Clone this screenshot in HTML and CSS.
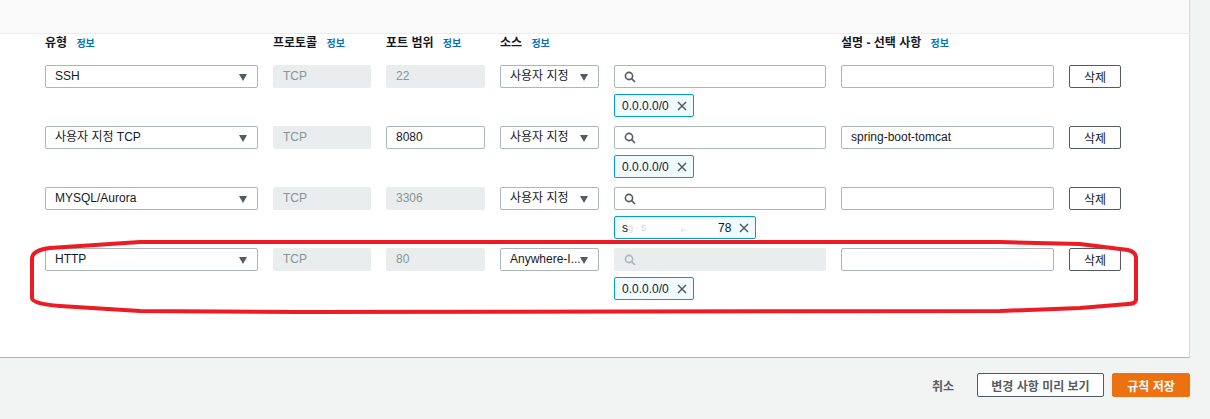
FILE: index.html
```html
<!DOCTYPE html>
<html lang="ko">
<head>
    <meta charset="UTF-8">
    <title>인바운드 규칙 편집</title>
    <link rel="stylesheet" href="styles.css">
</head>
<body>

<div class="page">
    <div class="top-band"></div>

    <div class="panel">
        <div class="rule-grid head">
            <div class="label">유형 <a class="info">정보</a></div>
            <div class="label">프로토콜 <a class="info">정보</a></div>
            <div class="label">포트 범위 <a class="info">정보</a></div>
            <div class="label">소스 <a class="info">정보</a></div>
            <div></div>
            <div class="label">설명 - 선택 사항 <a class="info">정보</a></div>
            <div></div>
        </div>

        <div class="rule">
            <div class="rule-grid">
                <div class="field select">SSH<span class="caret"></span></div>
                <div class="field disabled">TCP</div>
                <div class="field disabled">22</div>
                <div class="field select">사용자 지정<span class="caret"></span></div>
                <div class="field search"><svg class="mag" viewBox="0 0 12 12"><circle cx="5" cy="5" r="3.6"/><path d="M7.6 7.6 L11 11"/></svg></div>
                <div class="field"></div>
                <button class="btn-del">삭제</button>
            </div>
            <div class="chips">
                <span class="chip">0.0.0.0/0<svg class="x" viewBox="0 0 10 10"><path d="M1 1 L9 9 M9 1 L1 9"/></svg></span>
            </div>
        </div>

        <div class="rule">
            <div class="rule-grid">
                <div class="field select">사용자 지정 TCP<span class="caret"></span></div>
                <div class="field disabled">TCP</div>
                <div class="field">8080</div>
                <div class="field select">사용자 지정<span class="caret"></span></div>
                <div class="field search"><svg class="mag" viewBox="0 0 12 12"><circle cx="5" cy="5" r="3.6"/><path d="M7.6 7.6 L11 11"/></svg></div>
                <div class="field">spring-boot-tomcat</div>
                <button class="btn-del">삭제</button>
            </div>
            <div class="chips">
                <span class="chip">0.0.0.0/0<svg class="x" viewBox="0 0 10 10"><path d="M1 1 L9 9 M9 1 L1 9"/></svg></span>
            </div>
        </div>

        <div class="rule">
            <div class="rule-grid">
                <div class="field select">MYSQL/Aurora<span class="caret"></span></div>
                <div class="field disabled">TCP</div>
                <div class="field disabled">3306</div>
                <div class="field select">사용자 지정<span class="caret"></span></div>
                <div class="field search"><svg class="mag" viewBox="0 0 12 12"><circle cx="5" cy="5" r="3.6"/><path d="M7.6 7.6 L11 11"/></svg></div>
                <div class="field"></div>
                <button class="btn-del">삭제</button>
            </div>
            <div class="chips">
                <span class="chip">s<span class="blur">g · 5&nbsp;&nbsp;&nbsp;&nbsp;&nbsp;&nbsp;&nbsp;&nbsp;&nbsp;&nbsp;&nbsp;&nbsp;&nbsp;&nbsp;ᵢₙ.</span>78<svg class="x" viewBox="0 0 10 10"><path d="M1 1 L9 9 M9 1 L1 9"/></svg></span>
            </div>
        </div>

        <div class="rule">
            <div class="rule-grid">
                <div class="field select">HTTP<span class="caret"></span></div>
                <div class="field disabled">TCP</div>
                <div class="field disabled">80</div>
                <div class="field select">Anywhere-I...<span class="caret"></span></div>
                <div class="field search disabled"><svg class="mag" viewBox="0 0 12 12"><circle cx="5" cy="5" r="3.6"/><path d="M7.6 7.6 L11 11"/></svg></div>
                <div class="field"></div>
                <button class="btn-del">삭제</button>
            </div>
            <div class="chips">
                <span class="chip">0.0.0.0/0<svg class="x" viewBox="0 0 10 10"><path d="M1 1 L9 9 M9 1 L1 9"/></svg></span>
            </div>
        </div>

        <!-- 스크린샷 위에 손으로 그린 빨간 표시 -->
        <svg class="mark" viewBox="0 0 1190 330" width="1190" height="330">
            <path d="M140 208 L1000 208 L1080 210 L1128 216 Q1136 218 1136 224 L1136 266 Q1135 270 1128 270 L1080 274 L1000 277 L300 278 L140 277 L60 272 Q32 270 32 264 L32 224 Q33 216 50 214 Z"/>
        </svg>
    </div>

    <div class="footer">
        <span class="cancel">취소</span>
        <button class="btn">변경 사항 미리 보기</button>
        <button class="btn primary">규칙 저장</button>
    </div>
</div>

</body>
</html>
```

FILE: styles.css
```css
html, body {
    margin: 0;
    background: #f2f3f3;
}

body {
    font-family: "Liberation Sans", "Noto Sans CJK KR", sans-serif;
    font-size: 12px;
    color: #16191f;
}

.page {
    width: 1190px;
}

.top-band {
    height: 33px;
    background: #fafafa;
    border-bottom: 1px solid #eaeded;
    border-right: 1px solid #d5dbdb;
}

.panel {
    position: relative;
    background: #fff;
    border-right: 1px solid #d5dbdb;
    border-bottom: 1px solid #aab7b8;
    padding: 0 0 48px 45px;
    height: 275px;
}

.rule-grid {
    display: grid;
    grid-template-columns: 213px 98px 99px 99px 212px 213px 52px;
    column-gap: 15px;
}

.head {
    height: 18px;
    line-height: 18px;
    margin-bottom: 13px;
}

.label {
    font-weight: bold;
    font-size: 12px;
}

.info {
    color: #0073bb;
    font-size: 10px;
    margin-left: 6px;
}

.rule {
    margin-bottom: 9px;
}

.field {
    position: relative;
    box-sizing: border-box;
    height: 23px;
    line-height: 21px;
    border: 1px solid #aab7b8;
    border-radius: 2px;
    padding: 0 9px;
    background: #fff;
    white-space: nowrap;
    overflow: hidden;
}

.field.disabled {
    background: #eaeded;
    border-color: #eaeded;
    color: #879596;
}

.select {
    padding-right: 24px;
}

.caret {
    position: absolute;
    right: 10px;
    top: 8px;
    border-left: 4.5px solid transparent;
    border-right: 4.5px solid transparent;
    border-top: 7px solid #545b64;
}

.mag {
    width: 12px;
    height: 12px;
    margin-top: 5px;
    fill: none;
    stroke: #545b64;
    stroke-width: 1.6;
}

.search.disabled .mag {
    stroke: #aab7b8;
}

.btn-del {
    box-sizing: border-box;
    height: 23px;
    border: 1px solid #545b64;
    border-radius: 2px;
    background: #fff;
    font-family: inherit;
    font-size: 12px;
    color: #16191f;
    padding: 0;
}

.chips {
    padding-left: 569px;
    margin-top: 6px;
    height: 23px;
}

.chip {
    display: inline-flex;
    align-items: center;
    box-sizing: border-box;
    height: 23px;
    border: 1px solid #00a1c9;
    border-radius: 2px;
    background: #f1faff;
    padding: 0 6px 0 7px;
    font-size: 12px;
}

.chip .x {
    width: 10px;
    height: 10px;
    margin-left: 8px;
    stroke: #545b64;
    stroke-width: 1.5;
}

.blur {
    color: #c9d3d8;
    font-size: 9px;
    background: #fff;
    width: 90px;
    height: 16px;
    line-height: 16px;
    overflow: hidden;
    white-space: nowrap;
}

.mark {
    position: absolute;
    left: 0;
    top: 0;
    pointer-events: none;
}

.mark path {
    fill: none;
    stroke: #ed1c24;
    stroke-width: 4;
    stroke-linejoin: round;
}

.footer {
    display: flex;
    align-items: center;
    justify-content: flex-end;
    gap: 8px;
    padding: 15px 0;
}

.cancel {
    margin-right: 15px;
    font-size: 12px;
    font-weight: bold;
    color: #545b64;
}

.btn {
    box-sizing: border-box;
    height: 24px;
    border: 1px solid #545b64;
    border-radius: 2px;
    background: #fff;
    font-family: inherit;
    font-size: 12px;
    font-weight: bold;
    color: #545b64;
    padding: 0 12px;
    width: 127px;
}

.btn.primary {
    width: 78px;
    background: #ec7211;
    border-color: #ec7211;
    color: #fff;
}
```
